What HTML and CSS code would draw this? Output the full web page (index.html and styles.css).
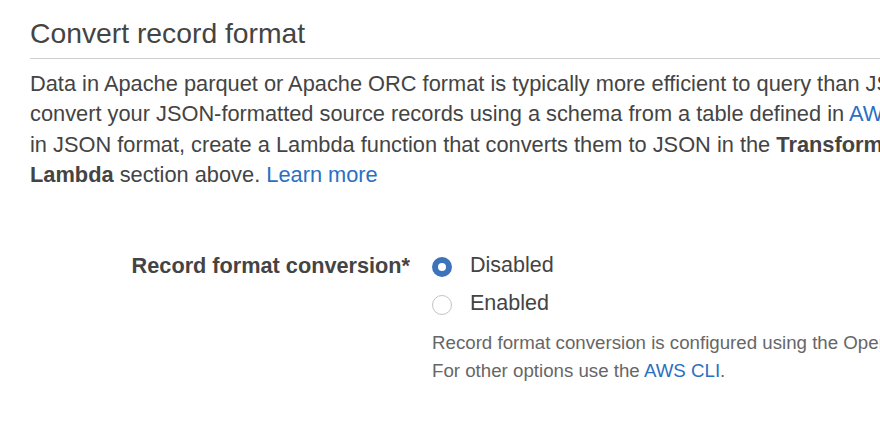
FILE: index.html
```html
<!DOCTYPE html>
<html lang="en">
<head>
<meta charset="utf-8">
<title>Convert record format</title>
<link rel="stylesheet" href="styles.css">
</head>
<body>
<section class="panel">
  <h2 class="panel-title">Convert record format</h2>
  <p class="intro">Data in Apache parquet or Apache ORC format is typically more efficient to query than JSON. Kinesis Data Firehose can<br>convert your JSON-formatted source records using a schema from a table defined in <a href="#">AWS Glue</a>. For records that aren't<br>in JSON format, create a Lambda function that converts them to JSON in the <b>Transform source records with AWS<br>Lambda</b> section above. <a href="#">Learn more</a></p>
  <div class="field">
    <div class="field-label">Record format conversion*</div>
    <div class="field-control">
      <div class="radio-group">
        <label class="radio-row"><span class="radio checked"></span><span>Disabled</span></label>
        <label class="radio-row"><span class="radio"></span><span>Enabled</span></label>
      </div>
      <p class="help">Record format conversion is configured using the OpenX JSON SerDe and the Apache Parquet SerDe.<br>For other options use the <a href="#">AWS CLI</a>.</p>
    </div>
  </div>
</section>
</body>
</html>
```
FILE: styles.css
```css
html, body {
  margin: 0;
  padding: 0;
  overflow: hidden;
  background: #ffffff;
}
body {
  font-family: "Liberation Sans", Arial, sans-serif;
  color: #444444;
  width: 880px;
  height: 438px;
}
.panel {
  padding: 16px 0 0 30px;
}
.panel-title {
  margin: 0;
  font-size: 28.3px;
  font-weight: normal;
  line-height: 34px;
  padding-bottom: 8px;
  border-bottom: 1px solid #cfcfcf;
  color: #444444;
  white-space: nowrap;
}
.intro {
  margin: 10px 0 0 0;
  font-size: 21.8px;
  line-height: 30.4px;
  white-space: nowrap;
}
.intro b {
  font-weight: bold;
}
a {
  color: #2a6fc2;
  text-decoration: none;
}
.field {
  display: grid;
  grid-template-columns: 380px 1fr;
  column-gap: 22px;
  margin-top: 56px;
}
.field-label {
  font-size: 21.7px;
  font-weight: bold;
  line-height: 37px;
  text-align: right;
  white-space: nowrap;
}
.radio-group {
  display: flex;
  flex-direction: column;
  gap: 1px;
}
.radio-row {
  display: flex;
  align-items: center;
  gap: 18px;
  font-size: 21.5px;
  line-height: 37px;
  white-space: nowrap;
}
.radio {
  box-sizing: border-box;
  width: 20px;
  height: 20px;
  border-radius: 50%;
  border: 1px solid #c4c4c4;
  background: #ffffff;
  margin-top: 3px;
  flex: none;
}
.radio.checked {
  border: 6.5px solid #3c73bb;
  background: #ffffff;
}
.help {
  margin: 7px 0 0 0;
  font-size: 18.7px;
  line-height: 28px;
  color: #666666;
  white-space: nowrap;
}
```
